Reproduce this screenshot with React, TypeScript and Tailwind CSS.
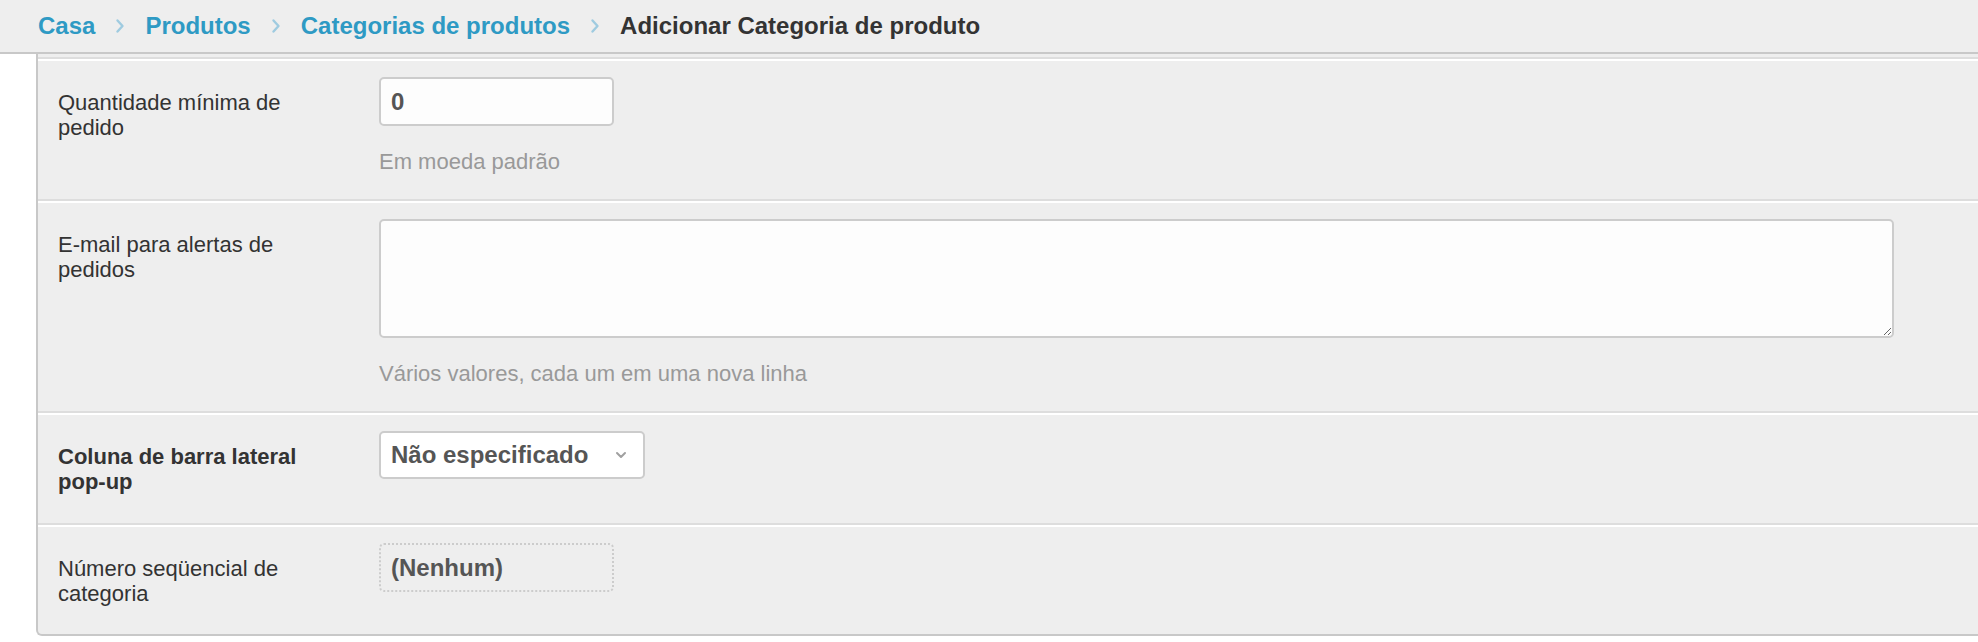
import React from "react";

const font = { fontFamily: '"Liberation Sans", Arial, Helvetica, sans-serif' };

function Chevron() {
  return (
    <svg width="10" height="16" viewBox="0 0 10 16" className="mx-[20px]">
      <path d="M2.5 2.5 L7.5 8 L2.5 13.5" fill="none" stroke="#9fcbe0" strokeWidth="2.4" strokeLinecap="round" strokeLinejoin="round" />
    </svg>
  );
}

function Row({ label, bold, children, last, pb }: { label: string[]; bold?: boolean; children: React.ReactNode; last?: boolean; pb?: string }) {
  return (
    <div className={"flex border-t-2 border-white pt-4 pl-5 " + (pb ?? "pb-[26px] ") + " " + (last ? "" : "border-b-2 border-b-[#dddddd]")}>
      <div className="w-[321px] shrink-0 pt-[13px] pb-[3px]">
        <div className={"w-[250px] text-[22px] leading-[25px] text-[#333333] " + (bold ? "font-bold" : "")}>
          {label.map((l, i) => (
            <div key={i} className="whitespace-nowrap">{l}</div>
          ))}
        </div>
      </div>
      <div className="flex-1">{children}</div>
    </div>
  );
}

function Desc({ children }: { children: React.ReactNode }) {
  return <div className="mt-[23px] text-[22px] leading-[25px] text-[#999999]">{children}</div>;
}

export default function App() {
  return (
    <div className="w-[1978px] h-[642px] bg-white overflow-hidden" style={font}>
      <div className="h-[54px] bg-[#eeeeee] border-b-2 border-[#c8c8c8] flex items-center pl-[38px] text-[24px] font-bold">
        <span className="text-[#2e9ac4]">Casa</span>
        <Chevron />
        <span className="text-[#2e9ac4]">Produtos</span>
        <Chevron />
        <span className="text-[#2e9ac4]">Categorias de produtos</span>
        <Chevron />
        <span className="text-[#333333]">Adicionar Categoria de produto</span>
      </div>
      <div className="ml-9 w-[2100px] bg-[#eeeeee] border-l-2 border-b-2 border-[#c8c8c8] rounded-bl-[6px]">
        <div className="h-[3px]" />
        <div className="border-b-2 border-[#dddddd]" />
        <Row label={["Quantidade mínima de", "pedido"]} pb="pb-[25px]">
          <div className="w-[235px] h-[49px] rounded-[5px] border-2 border-[#cccccc] bg-[#fdfdfd] flex items-center px-[10px] text-[24px] font-bold text-[#555555]">
            0
          </div>
          <Desc>Em moeda padrão</Desc>
        </Row>
        <Row label={["E-mail para alertas de", "pedidos"]} pb="pb-[25px]">
          <textarea className="block w-[1515px] h-[119px] rounded-[5px] border-2 border-[#cccccc] bg-[#fdfdfd] outline-none" />
          <Desc>Vários valores, cada um em uma nova linha</Desc>
        </Row>
        <Row label={["Coluna de barra lateral", "pop-up"]} bold>
          <div className="w-[266px] h-[48px] rounded-[5px] border-2 border-[#cccccc] bg-white flex items-center justify-between pl-[10px] pr-[16px] text-[24px] font-bold text-[#555555]">
            <span>Não especificado</span>
            <svg width="12" height="8" viewBox="0 0 12 8">
              <path d="M2 2 L6 6 L10 2" fill="none" stroke="#a0a0a0" strokeWidth="2" strokeLinecap="round" strokeLinejoin="round" />
            </svg>
          </div>
        </Row>
        <Row label={["Número seqüencial de", "categoria"]} last pb="pb-[25px]">
          <div className="w-[235px] h-[49px] rounded-[5px] border-2 border-dotted border-[#cccccc] flex items-center px-[10px] text-[24px] font-bold text-[#555555]">
            (Nenhum)
          </div>
        </Row>
      </div>
    </div>
  );
}
